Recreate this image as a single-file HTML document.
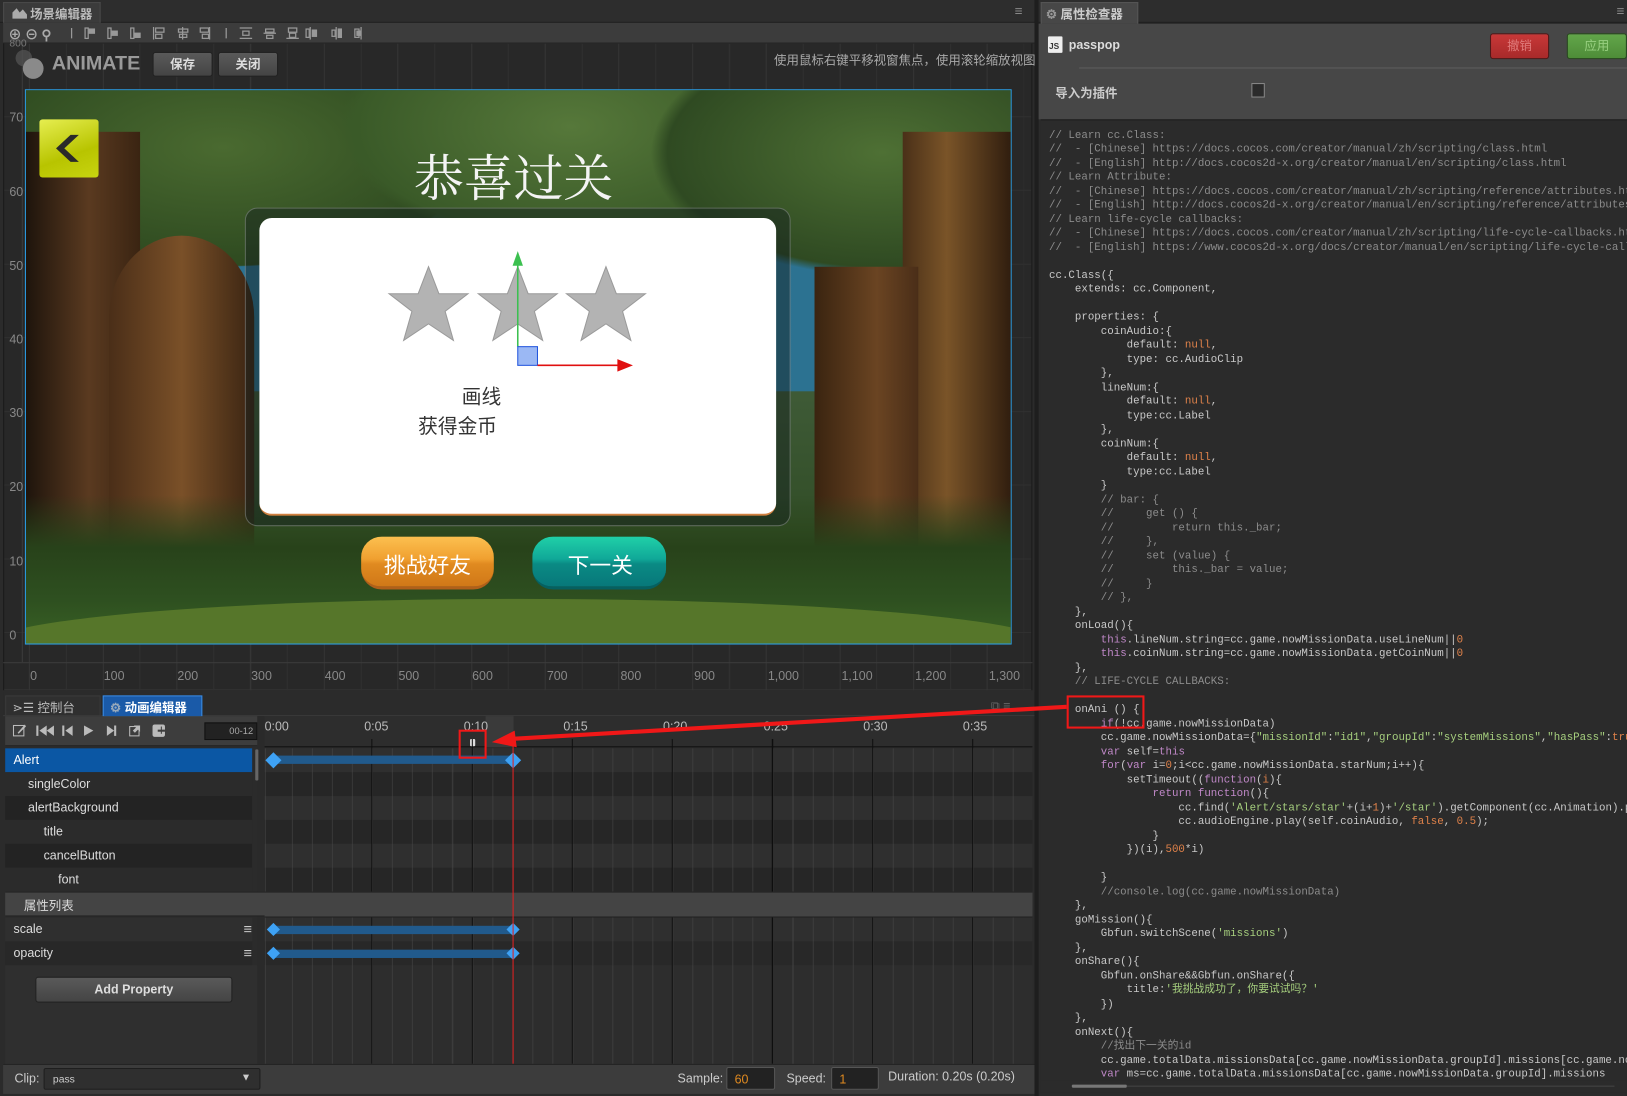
<!DOCTYPE html>
<html><head><meta charset="utf-8">
<style>
*{margin:0;padding:0;box-sizing:border-box}
html,body{width:1627px;height:1096px;overflow:hidden;background:#2a2a2a}
#w{position:absolute;left:0;top:0;width:1568px;height:1056px;transform:scale(1.0376,1.0379);transform-origin:0 0;font-family:"Liberation Sans","Noto Sans CJK SC",sans-serif;color:#ccc;font-size:12px;background:#2b2b2b}
.a{position:absolute}
.t{position:absolute;white-space:nowrap}
.code{position:absolute;font-family:"Liberation Mono","Noto Sans CJK SC",monospace;font-size:10.4px;line-height:13.5px;color:#c9c9c9;white-space:pre}
.c{color:#8c8c8c}.k{color:#c088c8}.n{color:#e0824a}.s{color:#a6cf7e}
.row{position:absolute;left:5px;width:238px;height:23px;padding-left:8px;line-height:23px;font-size:12px;color:#ddd}
.tr{position:absolute;left:255px;width:740px;height:23px}
.btn{position:absolute;background:linear-gradient(#5a5a5a,#444);border:1px solid #222;border-radius:3px;color:#ddd;font-weight:bold;text-align:center}
.dia{position:absolute;width:11px;height:11px;background:#3ea2f5;transform:rotate(45deg)}
.leaf{position:absolute;border-radius:50%}
</style></head><body><div id="w">

<div class="a" style="left:0;top:0;width:997px;height:22px;background:#2d2d2d;border-bottom:1px solid #1e1e1e"></div>
<div class="a" style="left:3px;top:2px;width:94px;height:20px;background:#3b3b3b;border:1px solid #4a4a4a;border-bottom:none"></div>
<svg class="a" style="left:11px;top:6px" width="16" height="13"><path d="M1 12 L1 6 L5 2 L8 6 L11 3 L15 8 L15 12Z" fill="#aaa"/></svg>
<div class="t" style="left:29px;top:5px;font-size:12px;color:#bbb;font-weight:bold">场景编辑器</div>
<div class="t" style="left:978px;top:3px;color:#888;font-size:13px">≡</div>
<div class="a" style="left:3px;top:22px;width:994px;height:20px;background:#3c3c3c;border-bottom:1px solid #222"></div>
<div class="t" style="left:8px;top:23px;color:#aaa;font-size:13px;letter-spacing:3px;font-weight:bold">⊕⊖⚲</div>
<svg class="a" style="left:66px;top:25px" width="300" height="14" stroke="#999" fill="none" stroke-width="1.2">
<path d="M3 2v10M152 2v10"/>
<rect x="16" y="2" width="3" height="10"/><rect x="20" y="3" width="5" height="4" fill="#999"/>
<rect x="38" y="2" width="3" height="10"/><rect x="42" y="5" width="5" height="4" fill="#999"/>
<rect x="60" y="2" width="3" height="10"/><rect x="64" y="7" width="5" height="4" fill="#999"/>
<path d="M82 1v12"/><rect x="84" y="2" width="8" height="4"/><rect x="84" y="8" width="6" height="4"/>
<path d="M110 1v12"/><rect x="106" y="3" width="9" height="3"/><rect x="107" y="8" width="7" height="3"/>
<path d="M136 1v12"/><rect x="127" y="2" width="8" height="4"/><rect x="129" y="8" width="6" height="4"/>
<path d="M165 2h12M165 12h12"/><rect x="168" y="5" width="6" height="4"/>
<path d="M188 7h12"/><rect x="190" y="3" width="8" height="3"/><rect x="191" y="9" width="6" height="3"/>
<path d="M210 12h12"/><rect x="212" y="2" width="8" height="4"/><rect x="213" y="7" width="6" height="4"/>
<path d="M233 1v12"/><rect x="229" y="3" width="3" height="8"/><rect x="235" y="4" width="4" height="6" fill="#999"/>
<path d="M258 1v12"/><rect x="254" y="4" width="3" height="6"/><rect x="260" y="3" width="3" height="8" fill="#999"/>
<path d="M282 1v12"/><rect x="276" y="3" width="4" height="8"/><rect x="278" y="5" width="3" height="4" fill="#999"/>
</svg>

<div class="a" style="left:3px;top:42px;width:992px;height:623px;background-color:#282828;background-image:repeating-linear-gradient(90deg,transparent 0 31px,#353535 31px 32px,transparent 32px 66.5px,#303030 66.5px 67.5px,transparent 67.5px 71px),repeating-linear-gradient(0deg,transparent 0 35px,#303030 35px 36px,transparent 36px 71px);background-position:-7px 0,0 -20px;border-left:1px solid #1a1a1a;border-right:1px solid #1a1a1a"></div>
<div class="a" style="left:3px;top:42px;width:19px;height:596px;border-right:1px solid #3c3c3c"></div>
<div class="a" style="left:3px;top:638px;width:992px;height:1px;background:#3c3c3c"></div>
<div class="t" style="left:9px;top:37px;color:#777;font-size:10px">800</div>
<div class="t" style="left:9px;top:106px;color:#888;font-size:12px">70</div>
<div class="t" style="left:9px;top:178px;color:#888;font-size:12px">60</div>
<div class="t" style="left:9px;top:249px;color:#888;font-size:12px">50</div>
<div class="t" style="left:9px;top:320px;color:#888;font-size:12px">40</div>
<div class="t" style="left:9px;top:391px;color:#888;font-size:12px">30</div>
<div class="t" style="left:9px;top:462px;color:#888;font-size:12px">20</div>
<div class="t" style="left:9px;top:534px;color:#888;font-size:12px">10</div>
<div class="t" style="left:9px;top:605px;color:#888;font-size:12px">0</div>
<div class="t" style="left:29px;top:644px;color:#888;font-size:12px">0</div>
<div class="t" style="left:100px;top:644px;color:#888;font-size:12px">100</div>
<div class="t" style="left:171px;top:644px;color:#888;font-size:12px">200</div>
<div class="t" style="left:242px;top:644px;color:#888;font-size:12px">300</div>
<div class="t" style="left:313px;top:644px;color:#888;font-size:12px">400</div>
<div class="t" style="left:384px;top:644px;color:#888;font-size:12px">500</div>
<div class="t" style="left:455px;top:644px;color:#888;font-size:12px">600</div>
<div class="t" style="left:527px;top:644px;color:#888;font-size:12px">700</div>
<div class="t" style="left:598px;top:644px;color:#888;font-size:12px">800</div>
<div class="t" style="left:669px;top:644px;color:#888;font-size:12px">900</div>
<div class="t" style="left:740px;top:644px;color:#888;font-size:12px">1,000</div>
<div class="t" style="left:811px;top:644px;color:#888;font-size:12px">1,100</div>
<div class="t" style="left:882px;top:644px;color:#888;font-size:12px">1,200</div>
<div class="t" style="left:953px;top:644px;color:#888;font-size:12px">1,300</div>

<div class="a" style="left:15px;top:48px;width:16px;height:16px;border-radius:50%;background:#555;opacity:.7"></div>
<div class="a" style="left:22px;top:56px;width:20px;height:20px;border-radius:50%;background:#8a8a8a"></div>
<div class="t" style="left:50px;top:51px;font-size:19px;font-weight:bold;color:#9a9a9a">ANIMATE</div>
<div class="btn" style="left:147px;top:50px;width:58px;height:24px;line-height:22px;font-size:12px">保存</div>
<div class="btn" style="left:210px;top:50px;width:58px;height:24px;line-height:22px;font-size:12px">关闭</div>
<div class="t" style="left:746px;top:49px;font-size:12px;color:#aaa">使用鼠标右键平移视窗焦点，使用滚轮缩放视图</div>

<!-- game scene -->
<div class="a" style="left:24px;top:86px;width:951px;height:535px;border:1px solid #2a9ee8;overflow:hidden;background:linear-gradient(180deg,#2a3f1e 0%,#35522a 15%,#2f5a4a 30%,#3a6060 42%,#3e5a36 55%,#34502a 75%,#3c5e26 100%)">
 <div class="a" style="left:40px;top:150px;width:880px;height:140px;background:linear-gradient(90deg,transparent,#2a7090 15%,#3a8098 50%,#2a7090 85%,transparent)"></div>
 <div class="leaf" style="left:-60px;top:-60px;width:500px;height:230px;background:radial-gradient(ellipse,#4a6a30,#2e4a20 70%,transparent 71%)"></div>
 <div class="leaf" style="left:300px;top:-80px;width:450px;height:230px;background:radial-gradient(ellipse,#56783a,#3a5a28 65%,transparent 70%)"></div>
 <div class="leaf" style="left:600px;top:-60px;width:450px;height:240px;background:radial-gradient(ellipse,#4e7034,#2f4a22 65%,transparent 70%)"></div>
 <div class="a" style="left:0;top:40px;width:110px;height:495px;background:linear-gradient(90deg,#1e140c,#5a3a20 55%,#3a2412)"></div>
 <div class="a" style="left:80px;top:140px;width:140px;height:395px;background:linear-gradient(90deg,#4a2e18,#7a5028 50%,#3a2412);border-radius:50% 50% 0 0/20% 20% 0 0"></div>
 <div class="a" style="left:845px;top:40px;width:106px;height:495px;background:linear-gradient(90deg,#4a3018,#7a5428 40%,#2e1c0e)"></div>
 <div class="a" style="left:760px;top:170px;width:100px;height:365px;background:linear-gradient(90deg,#3a2410,#6a4422 60%,#4a2e18)"></div>
 <div class="a" style="left:0;top:390px;width:951px;height:145px;background:linear-gradient(180deg,transparent,#28421a 35%,#2e5020 70%,#3a6224)"></div>
 <div class="a" style="left:-40px;top:490px;width:1030px;height:90px;border-radius:50% 50% 0 0;background:#56762a"></div>
</div>
<div class="a" style="left:38px;top:115px;width:57px;height:56px;border-radius:3px;background:linear-gradient(160deg,#e6ee50,#b8c400 60%,#c8d410)"></div>
<svg class="a" style="left:50px;top:126px" width="34" height="34"><path d="M26 4 L12 17 L26 30 L18 30 L4 17 L18 4Z" fill="#2a2a2a"/></svg>
<div class="t" style="left:399px;top:134px;font-size:48px;color:#f4f4f4;font-family:'Noto Serif CJK SC','Noto Sans CJK SC',serif">恭喜过关</div>
<div class="a" style="left:236px;top:200px;width:526px;height:307px;border-radius:12px;background:rgba(20,30,30,.45);border:1px solid rgba(200,200,200,.35)"></div>
<div class="a" style="left:250px;top:210px;width:498px;height:287px;border-radius:12px;background:#fff;border-bottom:2px solid #d08040"></div>
<svg class="a" style="left:370px;top:240px" width="260" height="120">
<defs><path id="st" d="M0 -38 L10 -12 L38 -12 L16 5 L24 33 L0 17 L-24 33 L-16 5 L-38 -12 L-10 -12Z"/></defs>
<use href="#st" x="43" y="55" fill="#b3b3b3" stroke="#9a9a9a"/>
<use href="#st" x="129" y="55" fill="#b3b3b3" stroke="#9a9a9a"/>
<use href="#st" x="214" y="55" fill="#b3b3b3" stroke="#9a9a9a"/>
<path d="M129 12 V94" stroke="#3cc050" stroke-width="1.5"/><path d="M129 2 L124 16 L134 16Z" fill="#3cc050"/>
<rect x="129" y="94" width="19" height="18" fill="#9bb8f4" stroke="#2255dd"/>
<path d="M148 112 H228" stroke="#e01010" stroke-width="1.5"/><path d="M240 112 L225 106 L225 118Z" fill="#e01010"/>
</svg>
<div class="t" style="left:445px;top:368px;font-size:19px;color:#333">画线</div>
<div class="t" style="left:403px;top:396px;font-size:19px;color:#333">获得金币</div>
<div class="a" style="left:348px;top:517px;width:128px;height:51px;border-radius:20px;background:linear-gradient(#fcc050,#f0a030 45%,#e08a20 55%,#d07818);border-bottom:3px solid #b0601a"></div>
<div class="t" style="left:370px;top:529px;font-size:21px;color:#fff">挑战好友</div>
<div class="a" style="left:513px;top:517px;width:129px;height:51px;border-radius:20px;background:linear-gradient(#20d0a8,#10a898 45%,#0a8a84 55%,#08787a);border-bottom:3px solid #066060"></div>
<div class="t" style="left:547px;top:529px;font-size:21px;color:#fff">下一关</div>

<div class="a" style="left:3px;top:667px;width:994px;height:23px;background:#2b2b2b;border-bottom:1px solid #3a3a3a"></div>
<div class="a" style="left:5px;top:670px;width:92px;height:20px;background:#2f2f2f;border:1px solid #3a3a3a"></div>
<div class="t" style="left:12px;top:673px;font-size:12px;color:#bbb">⋗☰ 控制台</div>
<div class="a" style="left:99px;top:670px;width:96px;height:21px;background:#1a5aa8;border:1px solid #3a8ae0"></div>
<div class="t" style="left:106px;top:673px;font-size:12px;color:#fff;font-weight:bold"><span style="color:#9ab">⚙</span> 动画编辑器</div>
<div class="t" style="left:955px;top:673px;color:#666;font-size:12px">⧉ ≡</div>

<div class="a" style="left:5px;top:690px;width:243px;height:29px;background:#3d3d3d;border-bottom:1px solid #222"></div>
<svg class="a" style="left:12px;top:697px" width="150" height="14" fill="#bbb">
<rect x="1" y="2" width="10" height="10" fill="none" stroke="#bbb"/><path d="M5 9 L12 1 L13 3 L6 10Z"/>
<path d="M23 2h2v10h-2zM33 2v10l-7-5zM40 2v10l-7-5z"/>
<path d="M48 2h2v10h-2zM58 2v10l-7-5z"/>
<path d="M69 2v10l9-5z"/>
<path d="M91 2v10l7-5zM98 2h2v10h-2z"/>
<rect x="113" y="3" width="9" height="9" fill="none" stroke="#bbb"/><path d="M117 2h6v6l-2-2-3 3-2-2 3-3z"/>
<rect x="135" y="1" width="12" height="12" rx="2"/>
</svg>
<div class="a" style="left:152px;top:703px;width:7px;height:1.6px;background:#3d3d3d"></div><div class="a" style="left:154.7px;top:700px;width:1.6px;height:7px;background:#3d3d3d"></div>
<div class="a" style="left:197px;top:696px;width:51px;height:17px;background:#222;border:1px solid #111;color:#aaa;font-size:9px;text-align:right;padding-right:3px;line-height:15px">00-12</div>
<div class="a" style="left:248px;top:690px;width:7px;height:335px;background:#2a2a2a"></div>
<div class="a" style="left:246px;top:722px;width:3px;height:30px;background:#666;border-radius:1px"></div>
<div class="a" style="left:255px;top:690px;width:740px;height:30px;background:#2d2d2d;border-bottom:1px solid #111"></div>
<div class="a" style="left:468px;top:690px;width:27px;height:30px;background:#3a3a3a"></div>
<div class="t" style="left:255px;top:693px;font-size:12px;color:#bbb">0:00</div>
<div class="t" style="left:351px;top:693px;font-size:12px;color:#bbb">0:05</div>
<div class="t" style="left:447px;top:693px;font-size:12px;color:#bbb">0:10</div>
<div class="t" style="left:543px;top:693px;font-size:12px;color:#bbb">0:15</div>
<div class="t" style="left:639px;top:693px;font-size:12px;color:#bbb">0:20</div>
<div class="t" style="left:736px;top:693px;font-size:12px;color:#bbb">0:25</div>
<div class="t" style="left:832px;top:693px;font-size:12px;color:#bbb">0:30</div>
<div class="t" style="left:928px;top:693px;font-size:12px;color:#bbb">0:35</div>
<div class="a" style="left:453px;top:712px;width:5px;height:7px;background:#ddd;border-radius:1px"></div>

<div class="row" style="top:721px;background:#0b57a4;color:#fff">Alert</div>
<div class="row" style="top:744px;background:#2b2b2b;padding-left:22px">singleColor</div>
<div class="row" style="top:767px;background:#232323;padding-left:22px">alertBackground</div>
<div class="row" style="top:790px;background:#2b2b2b;padding-left:37px">title</div>
<div class="row" style="top:813px;background:#232323;padding-left:37px">cancelButton</div>
<div class="row" style="top:836px;background:#2b2b2b;padding-left:51px">font</div>
<div class="tr" style="top:721px;background:#2f2f2f"></div>
<div class="tr" style="top:744px;background:#262626"></div>
<div class="tr" style="top:767px;background:#2f2f2f"></div>
<div class="tr" style="top:790px;background:#262626"></div>
<div class="tr" style="top:813px;background:#2f2f2f"></div>
<div class="tr" style="top:836px;background:#262626"></div>
<div class="a" style="left:5px;top:859px;width:990px;height:24px;background:#444;border-top:1px solid #222;border-bottom:1px solid #222"></div>
<div class="t" style="left:23px;top:864px;font-size:12px;color:#ddd">属性列表</div>
<div class="t" style="left:818px;top:864px;font-size:12px;color:#ccc">WrapMode:</div>
<div class="a" style="left:883px;top:862px;width:101px;height:20px;background:#2e2e2e;border:1px solid #222;border-radius:2px;font-size:9px;color:#bbb;padding:4px 0 0 8px">Normal<span style="position:absolute;right:6px;top:2px;font-size:10px;color:#ccc">▼</span></div>
<div class="row" style="top:884px;background:#2f2f2f">scale<span style="position:absolute;right:0;top:0;font-size:14px;color:#ccc">≡</span></div>
<div class="row" style="top:907px;background:#282828">opacity<span style="position:absolute;right:0;top:0;font-size:14px;color:#ccc">≡</span></div>
<div class="a" style="left:5px;top:930px;width:243px;height:95px;background:#2f2f2f"></div>
<div class="tr" style="top:884px;background:#2f2f2f"></div>
<div class="tr" style="top:907px;background:#282828"></div>
<div class="tr" style="top:930px;height:95px;background:#2d2d2d"></div>
<div class="btn" style="left:34px;top:941px;width:190px;height:25px;line-height:23px;font-size:12px">Add Property</div>

<div class="a" style="left:255px;top:721px;width:740px;height:304px;background-image:repeating-linear-gradient(90deg,transparent 0 18.3px,rgba(70,70,70,.6) 18.3px 19.3px);background-position:8px 0;pointer-events:none"></div>
<div class="a" style="left:255px;top:712px;width:740px;height:313px;background-image:repeating-linear-gradient(90deg,transparent 0 95.5px,#0e0e0e 95.5px 96.5px);background-position:7.5px 0"></div>
<div class="a" style="left:255px;top:859px;width:740px;height:25px;background:#444;border-top:1px solid #222;border-bottom:1px solid #222"></div>
<div class="a" style="left:263px;top:728px;width:231px;height:8px;background:#215a8c"></div>
<div class="dia" style="left:257.5px;top:726.5px"></div><div class="dia" style="left:488.5px;top:726.5px"></div>
<div class="a" style="left:263px;top:892px;width:231px;height:8px;background:#215a8c"></div>
<div class="dia" style="left:258.5px;top:890.5px;width:9px;height:9px"></div><div class="dia" style="left:489.5px;top:890.5px;width:9px;height:9px"></div>
<div class="a" style="left:263px;top:915px;width:231px;height:8px;background:#215a8c"></div>
<div class="dia" style="left:258.5px;top:913.5px;width:9px;height:9px"></div><div class="dia" style="left:489.5px;top:913.5px;width:9px;height:9px"></div>
<div class="a" style="left:494px;top:712px;width:1px;height:313px;background:#e02020"></div>

<div class="a" style="left:3px;top:1025px;width:994px;height:29px;background:#3c3c3c;border-top:1px solid #222"></div>
<div class="t" style="left:14px;top:1032px;font-size:12px;color:#ccc">Clip:</div>
<div class="a" style="left:42px;top:1029px;width:209px;height:21px;background:#2f2f2f;border:1px solid #1e1e1e;border-radius:2px;font-size:10px;color:#ccc;padding:5px 0 0 8px">pass<span style="position:absolute;right:8px;top:3px;font-size:10px">▼</span></div>
<div class="t" style="left:653px;top:1032px;font-size:12px;color:#ccc">Sample:</div>
<div class="a" style="left:700px;top:1028px;width:47px;height:22px;background:#222;border:1px solid #555;border-radius:2px;color:#e08a20;font-size:12px;padding:4px 0 0 7px">60</div>
<div class="t" style="left:758px;top:1032px;font-size:12px;color:#ccc">Speed:</div>
<div class="a" style="left:801px;top:1028px;width:46px;height:22px;background:#222;border:1px solid #555;border-radius:2px;color:#e08a20;font-size:12px;padding:4px 0 0 7px">1</div>
<div class="t" style="left:856px;top:1030px;font-size:12px;color:#ccc">Duration: 0.20s (0.20s)</div>

<div class="a" style="left:997px;top:0;width:4px;height:1056px;background:#1e1e1e"></div>
<div class="a" style="left:1001px;top:0;width:567px;height:22px;background:#2d2d2d;border-bottom:1px solid #1e1e1e"></div>
<div class="a" style="left:1003px;top:2px;width:94px;height:21px;background:#474747;border:1px solid #555;border-bottom:none"></div>
<div class="t" style="left:1008px;top:5px;font-size:12px;color:#ccc;font-weight:bold"><span style="color:#999">⚙</span> 属性检查器</div>
<div class="t" style="left:1558px;top:3px;color:#888;font-size:13px">≡</div>
<div class="a" style="left:1001px;top:23px;width:567px;height:92px;background:#474747"></div>
<div class="a" style="left:1010px;top:35px;width:14px;height:16px;background:#eee;border-radius:1px;font-size:8px;color:#333;font-weight:bold;padding:5px 0 0 1px;line-height:9px">JS</div>
<div class="t" style="left:1030px;top:36px;font-size:12px;color:#ddd;font-weight:bold">passpop</div>
<div class="a" style="left:1436px;top:32px;width:57px;height:25px;border-radius:3px;background:linear-gradient(#c83838,#a82a2a);border:1px solid #501818;color:#e07a7a;text-align:center;line-height:23px;font-size:12px">撤销</div>
<div class="a" style="left:1510px;top:32px;width:58px;height:25px;border-radius:3px;background:linear-gradient(#62a64a,#4e8c38);border:1px solid #284a1e;color:#98d080;text-align:center;line-height:23px;font-size:12px">应用</div>
<div class="a" style="left:1040px;top:65px;width:528px;height:1px;background:#5e5e5e"></div>
<div class="t" style="left:1017px;top:81px;font-size:12px;color:#ccc;font-weight:bold">导入为插件</div>
<div class="a" style="left:1206px;top:80px;width:13px;height:14px;background:#2b2b2b;border:1px solid #888"></div>
<div class="a" style="left:1003px;top:115px;width:565px;height:938px;background:#2b2b2b;border-top:1px solid #1e1e1e;overflow:hidden">
<div class="code" style="left:8px;top:-5px">
<span class="c">// Learn cc.Class:
//  - [Chinese] https://docs.cocos.com/creator/manual/zh/scripting/class.html
//  - [English] http://docs.cocos2d-x.org/creator/manual/en/scripting/class.html
// Learn Attribute:
//  - [Chinese] https://docs.cocos.com/creator/manual/zh/scripting/reference/attributes.html
//  - [English] http://docs.cocos2d-x.org/creator/manual/en/scripting/reference/attributes.html
// Learn life-cycle callbacks:
//  - [Chinese] https://docs.cocos.com/creator/manual/zh/scripting/life-cycle-callbacks.html
//  - [English] https://www.cocos2d-x.org/docs/creator/manual/en/scripting/life-cycle-callbacks.html</span>

cc.Class({
    extends: cc.Component,

    properties: {
        coinAudio:{
            default: <span class="n">null</span>,
            type: cc.AudioClip
        },
        lineNum:{
            default: <span class="n">null</span>,
            type:cc.Label
        },
        coinNum:{
            default: <span class="n">null</span>,
            type:cc.Label
        }
<span class="c">        // bar: {
        //     get () {
        //         return this._bar;
        //     },
        //     set (value) {
        //         this._bar = value;
        //     }
        // },</span>
    },
    onLoad(){
        <span class="k">this</span>.lineNum.string=cc.game.nowMissionData.useLineNum||<span class="n">0</span>
        <span class="k">this</span>.coinNum.string=cc.game.nowMissionData.getCoinNum||<span class="n">0</span>
    },
<span class="c">    // LIFE-CYCLE CALLBACKS:</span>

    onAni () {
        <span class="k">if</span>(!cc.game.nowMissionData)
        cc.game.nowMissionData={<span class="s">"missionId"</span>:<span class="s">"id1"</span>,<span class="s">"groupId"</span>:<span class="s">"systemMissions"</span>,<span class="s">"hasPass"</span>:<span class="n">true</span>}
        <span class="k">var</span> self=<span class="k">this</span>
        <span class="k">for</span>(<span class="k">var</span> i=<span class="n">0</span>;i&lt;cc.game.nowMissionData.starNum;i++){
            setTimeout((<span class="k">function</span>(<span class="n">i</span>){
                <span class="k">return</span> <span class="k">function</span>(){
                    cc.find(<span class="s">'Alert/stars/star'</span>+(i+<span class="n">1</span>)+<span class="s">'/star'</span>).getComponent(cc.Animation).play()
                    cc.audioEngine.play(self.coinAudio, <span class="n">false</span>, <span class="n">0.5</span>);
                }
            })(i),<span class="n">500</span>*i)

        }
<span class="c">        //console.log(cc.game.nowMissionData)</span>
    },
    goMission(){
        Gbfun.switchScene(<span class="s">'missions'</span>)
    },
    onShare(){
        Gbfun.onShare&amp;&amp;Gbfun.onShare({
            title:<span class="s">'我挑战成功了，你要试试吗？'</span>
        })
    },
    onNext(){
<span class="c">        //找出下一关的id</span>
        cc.game.totalData.missionsData[cc.game.nowMissionData.groupId].missions[cc.game.nowMissionData.missionId]
        <span class="k">var</span> ms=cc.game.totalData.missionsData[cc.game.nowMissionData.groupId].missions
</div>
<div class="a" style="left:0;top:925px;width:565px;height:13px;background:#2b2b2b"></div>
<div class="a" style="left:30px;top:929px;width:53px;height:3px;background:#777;border-radius:1px"></div>
<div class="a" style="left:83px;top:930px;width:470px;height:1px;background:#444"></div>
</div>

<div class="a" style="left:442px;top:703px;width:27px;height:28px;border:2px solid #f01818"></div>
<div class="a" style="left:1028px;top:670px;width:75px;height:32px;border:2px solid #f01818"></div>
<svg class="a" style="left:0;top:0" width="1568" height="1056">
<path d="M1028 681 L492 712" stroke="#f01818" stroke-width="4"/>
<path d="M474 715 L496 704 L498 720Z" fill="#f01818"/>
</svg>
</div></body></html>
